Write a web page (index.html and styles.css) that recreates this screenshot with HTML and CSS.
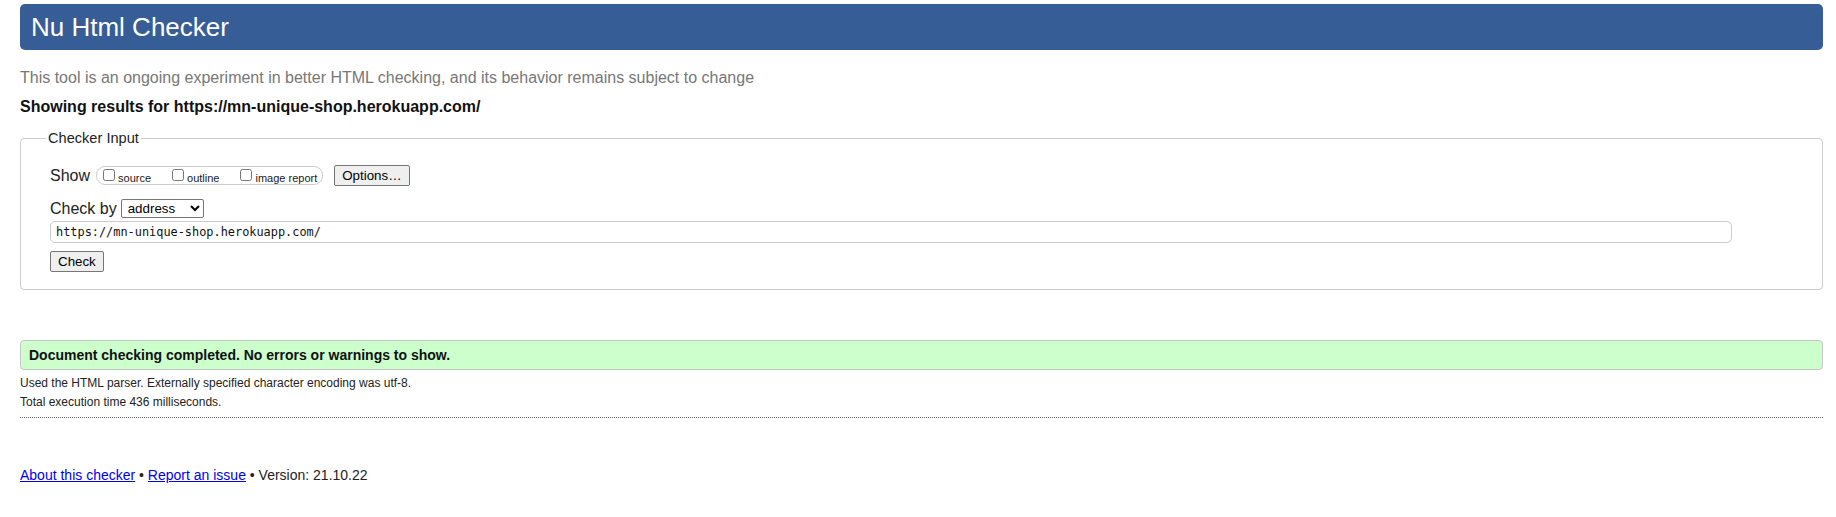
FILE: index.html
```html
<!DOCTYPE html>
<html lang="en">
<head>
<meta charset="utf-8">
<title>Showing results for https://mn-unique-shop.herokuapp.com/ - Nu Html Checker</title>
<link rel="stylesheet" href="styles.css">
</head>
<body>
<h1 class="masthead">Nu Html Checker</h1>
<p class="intro">This tool is an ongoing experiment in better HTML checking, and its behavior remains subject to change</p>
<p class="showing">Showing results for https://mn-unique-shop.herokuapp.com/</p>

<form class="checker-form">
  <fieldset class="checker-input">
    <legend class="legend">Checker Input</legend>
    <div class="row show-row">
      <span class="row-label">Show</span>
      <span class="checkboxes">
        <label class="cb"><input type="checkbox" class="cb-box"><span class="cb-text">source</span></label>
        <label class="cb"><input type="checkbox" class="cb-box"><span class="cb-text">outline</span></label>
        <label class="cb cb-last"><input type="checkbox" class="cb-box"><span class="cb-text">image report</span></label>
      </span>
      <button type="button" class="btn btn-options">Options…</button>
    </div>
    <div class="row checkby-row">
      <span class="row-label">Check by</span>
      <select class="doc-select">
        <option>address</option>
        <option>file upload</option>
        <option>text input</option>
      </select>
    </div>
    <div class="url-row">
      <input class="url-input" type="url" value="https://mn-unique-shop.herokuapp.com/">
    </div>
    <div class="submit-row">
      <button type="button" class="btn btn-check">Check</button>
    </div>
  </fieldset>
</form>

<div class="success">Document checking completed. No errors or warnings to show.</div>
<div class="details">
  <p class="detail-line">Used the HTML parser. Externally specified character encoding was utf-8.</p>
  <p class="detail-line">Total execution time 436 milliseconds.</p>
</div>

<p class="footer"><a href="#" class="link">About this checker</a> • <a href="#" class="link">Report an issue</a> • Version: 21.10.22</p>
</body>
</html>
```

FILE: styles.css
```css
html, body {
  background: #fff;
}
body {
  margin: 0;
  padding: 4px 13px 0 20px;
  font-family: "Liberation Sans", Arial, sans-serif;
  color: #1a1a1a;
}
.masthead {
  margin: 0;
  height: 46px;
  line-height: 46px;
  padding-left: 11px;
  background: #365d95;
  color: #fff;
  font-size: 26px;
  font-weight: normal;
  border-radius: 5px;
}
.intro {
  margin: 19px 0 0;
  font-size: 16px;
  color: #777;
}
.showing {
  margin: 11px 0 0;
  font-size: 16px;
  font-weight: bold;
  color: #111;
}
.checker-form {
  margin: 14px 0 0;
}
.checker-input {
  margin: 0;
  padding: 19px 29px 17px 29px;
  border: 1px solid #ccc;
  border-radius: 4px;
  min-width: 0;
}
.legend {
  padding: 0 2px;
  margin-left: -4px;
  font-size: 14.6px;
  color: #222;
}
.row {
  display: flex;
  align-items: center;
}
.row-label {
  font-size: 16px;
  color: #222;
}
.checkboxes {
  display: inline-flex;
  align-items: center;
  height: 17px;
  margin-left: 6px;
  padding: 0 5px 0 2px;
  border: 1px solid #ccc;
  border-radius: 9px;
}
.cb {
  display: inline-flex;
  align-items: center;
  margin-right: 17px;
  font-size: 11px;
}
.cb-last {
  margin-right: 0;
}
.cb-box {
  width: 12px;
  height: 12px;
  margin: 0 3px 0 4px;
  position: relative;
  top: -1px;
}
.cb-text {
  padding-top: 4px;
}
.btn {
  font-family: "Liberation Sans", Arial, sans-serif;
  font-size: 13.33px;
  color: #000;
  background: #efefef;
  border: 1px solid #767676;
  border-radius: 2px;
  height: 21px;
  line-height: 17px;
}
.btn-options {
  margin-left: 11px;
  padding: 0 7px;
}
.checkby-row {
  margin-top: 13px;
}
.doc-select {
  margin-left: 4px;
  width: 83px;
  height: 19px;
  font-family: "Liberation Sans", Arial, sans-serif;
  font-size: 13.33px;
  color: #000;
  background: #fff;
  border: 1px solid #767676;
  border-radius: 2px;
  padding: 0 0 0 2px;
}
.url-row {
  margin-top: 3px;
}
.url-input {
  box-sizing: border-box;
  display: block;
  width: calc(100% - 61px);
  height: 22px;
  padding: 0 5px;
  border: 1px solid #ccc;
  border-radius: 5px;
  font-family: "DejaVu Sans Mono", "Liberation Mono", monospace;
  font-size: 11.9px;
  color: #111;
}
.submit-row {
  margin-top: 8px;
}
.btn-check {
  padding: 0 7px;
}
.success {
  margin-top: 50px;
  height: 28px;
  line-height: 28px;
  padding-left: 8px;
  background: #ccffcc;
  border: 1px solid #c6c6c6;
  border-radius: 4px;
  font-size: 14px;
  font-weight: bold;
  color: #111;
}
.details {
  margin-top: 4px;
  padding-bottom: 5px;
  border-bottom: 1px dotted #666;
}
.detail-line {
  margin: 0;
  font-size: 12px;
  line-height: 19px;
  color: #222;
}
.footer {
  margin: 49px 0 0;
  font-size: 14px;
  color: #222;
}
.link {
  color: #0000ee;
}
```
